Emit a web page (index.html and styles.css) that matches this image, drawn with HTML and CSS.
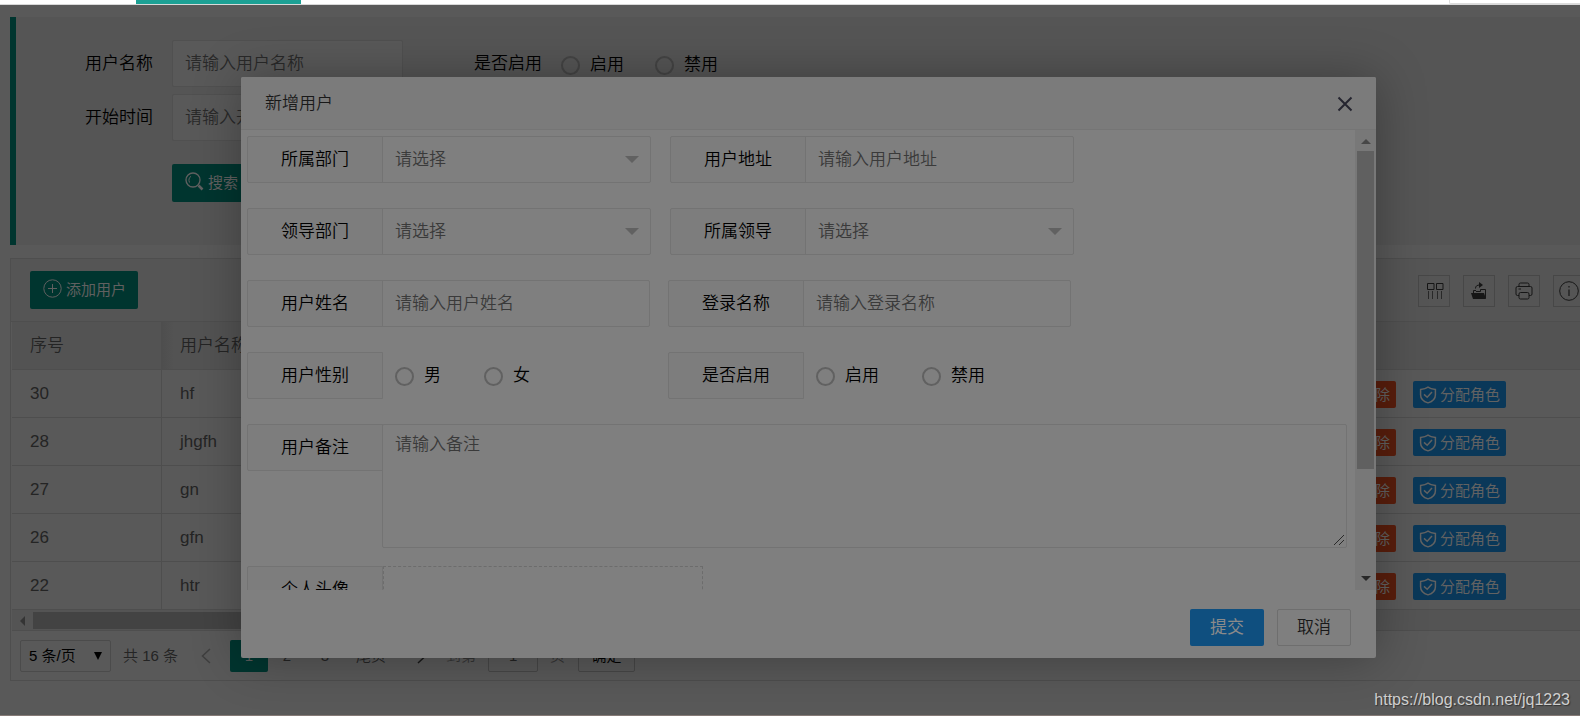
FILE: index.html
```html
<!DOCTYPE html>
<html lang="zh-CN">
<head>
<meta charset="utf-8">
<title>用户管理</title>
<link rel="stylesheet" href="styles.css">
</head>
<body>
<svg class="sprite" aria-hidden="true">
  <symbol id="shield" viewBox="0 0 18 18"><path d="M9 1.2C7 2.7 4.600 3.200 1.600 3.400V9c0 4 3.200 6.600 7.400 7.900C13.200 15.600 16.400 13 16.400 9V3.400C13.400 3.200 11 2.700 9 1.200Z" fill="none" stroke="currentColor" stroke-width="1.500"/><path d="M5 8.400 8.200 11.300 13 6" fill="none" stroke="currentColor" stroke-width="1.500"/></symbol>
  <symbol id="caret" viewBox="0 0 14 7"><path d="M0 0H14L7 7Z" fill="currentColor"/></symbol>
</svg>

<header class="topbar">
  <div class="topbar-tab"></div>
  <div class="topbar-menu"></div>
</header>

<main class="page">
  <form class="search">
    <div class="search-row">
      <label class="search-label" for="q-name">用户名称</label>
      <input class="search-input" id="q-name" placeholder="请输入用户名称">
      <span class="search-label status-label">是否启用</span>
      <label class="radio search-radio"><input type="radio" name="q-state">启用</label>
      <label class="radio search-radio"><input type="radio" name="q-state">禁用</label>
    </div>
    <div class="search-row">
      <label class="search-label" for="q-start">开始时间</label>
      <input class="search-input" id="q-start" placeholder="请输入开始时间">
    </div>
    <div class="search-actions">
      <button type="button" class="btn">
        <svg width="19" height="19" viewBox="0 0 19 19" fill="none" stroke="currentColor"><circle cx="8" cy="8" r="7" stroke-width="1.300"/><path d="M4.500 10.500C3.300 8 4 5.500 6 4.300" stroke-width="1"/><path d="M13.500 13.500 17.500 17.500" stroke-width="2.500"/></svg>
        搜索
      </button>
    </div>
  </form>

  <section class="grid">
    <div class="grid-tools">
      <button type="button" class="btn">
        <svg width="19" height="19" viewBox="0 0 19 19" fill="none" stroke="currentColor"><circle cx="9.500" cy="9.500" r="8.700"/><path d="M9.500 5V14M5 9.500H14"/></svg>
        添加用户
      </button>
      <div class="tool-icons">
        <button type="button" class="tool" aria-label="筛选列"><svg width="18" height="18" viewBox="0 0 18 18" fill="none" stroke="currentColor"><path d="M2.500 1.500H9V7.500H2.500ZM11.500 1.500H18V7.500H11.500Z"/><path d="M3.500 9V17M7.500 9V17M12.500 9V17M16.500 9V17" stroke-opacity=".7"/></svg></button>
        <button type="button" class="tool" aria-label="导出"><svg width="18" height="18" viewBox="0 0 18 18"><path d="M1 11H14L16 17H3Z" fill="currentColor"/><path d="M3.500 11V8.500H6M15.500 16V7.500H10.500V9.500H6M5.500 6.500C5.500 4 7 3 10 3" fill="none" stroke="currentColor"/><path d="M9 0 13 3 9 6Z" fill="currentColor"/></svg></button>
        <button type="button" class="tool" aria-label="打印"><svg width="18" height="18" viewBox="0 0 18 18" fill="none" stroke="currentColor"><path d="M4 4.500V2.500Q4 1 5.500 1H12.500Q14 1 14 2.500V4.500M4 13.500H2.500Q1 13.500 1 12V6Q1 4.500 2.500 4.500H15.500Q17 4.500 17 6V12Q17 13.500 15.500 13.500H14M3.500 7H6"/><rect x="4" y="10.500" width="10" height="6.500" rx="1.500"/></svg></button>
        <button type="button" class="tool" aria-label="提示"><svg width="20" height="20" viewBox="0 0 20 20" fill="none" stroke="currentColor"><circle cx="10" cy="10" r="9.300"/><path d="M10 8.500V15M10 5V6.500" stroke-width="1.200"/></svg></button>
      </div>
    </div>

    <table class="users">
      <thead><tr><th class="col-id">序号</th><th class="col-name">用户名称</th><th></th></tr></thead>
      <tbody>
        <tr><td class="col-id">30</td><td>hf</td><td class="ops"><button type="button" class="op del">删除</button><button type="button" class="op role"><svg width="18" height="18"><use href="#shield"/></svg>分配角色</button></td></tr>
        <tr><td class="col-id">28</td><td>jhgfh</td><td class="ops"><button type="button" class="op del">删除</button><button type="button" class="op role"><svg width="18" height="18"><use href="#shield"/></svg>分配角色</button></td></tr>
        <tr><td class="col-id">27</td><td>gn</td><td class="ops"><button type="button" class="op del">删除</button><button type="button" class="op role"><svg width="18" height="18"><use href="#shield"/></svg>分配角色</button></td></tr>
        <tr><td class="col-id">26</td><td>gfn</td><td class="ops"><button type="button" class="op del">删除</button><button type="button" class="op role"><svg width="18" height="18"><use href="#shield"/></svg>分配角色</button></td></tr>
        <tr><td class="col-id">22</td><td>htr</td><td class="ops"><button type="button" class="op del">删除</button><button type="button" class="op role"><svg width="18" height="18"><use href="#shield"/></svg>分配角色</button></td></tr>
      </tbody>
    </table>

    <div class="hscroll">
      <svg width="5" height="10" viewBox="0 0 5 10"><path d="M5 0V10L0 5Z" fill="currentColor"/></svg>
      <div class="hscroll-thumb"></div>
    </div>

    <nav class="pager">
      <div class="page-size">
        <select aria-label="每页条数"><option>5 条/页</option></select>
        <svg width="8" height="8" viewBox="0 0 8 8"><path d="M0 0H8L4 8Z"/></svg>
      </div>
      <span class="total">共 16 条</span>
      <button type="button" class="arrow prev" aria-label="上一页"><svg width="10" height="16" viewBox="0 0 10 16" fill="none" stroke="currentColor" stroke-width="1.500"><path d="M9 1 1.500 8 9 15"/></svg></button>
      <button type="button" class="num current">1</button>
      <button type="button" class="num">2</button>
      <button type="button" class="num">3</button>
      <button type="button" class="last">尾页</button>
      <button type="button" class="arrow" aria-label="下一页"><svg width="10" height="16" viewBox="0 0 10 16" fill="none" stroke="currentColor" stroke-width="1.500"><path d="M1 1 8.500 8 1 15"/></svg></button>
      <label class="jump">到第 <input value="1"> 页</label>
      <button type="button" class="go">确定</button>
    </nav>
  </section>
</main>
<footer class="baseline"></footer>

<div class="watermark">https://blog.csdn.net/jq1223</div>

<div class="modal" role="dialog" aria-labelledby="modal-title">
  <div class="modal-head">
    <h2 id="modal-title">新增用户</h2>
    <button type="button" class="close" aria-label="关闭"><svg width="16" height="16" viewBox="0 0 16 16" fill="none" stroke="currentColor" stroke-width="2"><path d="M1.500 1.500 14.500 14.500M14.500 1.500 1.500 14.500"/></svg></button>
  </div>
  <div class="modal-body">
    <form class="fields">
      <div class="row">
        <div class="group"><label for="dept">所属部门</label><div class="select"><select id="dept"><option>请选择</option></select><svg width="14" height="7"><use href="#caret"/></svg></div></div>
        <div class="group"><label for="addr">用户地址</label><input id="addr" placeholder="请输入用户地址"></div>
      </div>
      <div class="row">
        <div class="group"><label for="lead-dept">领导部门</label><div class="select"><select id="lead-dept"><option>请选择</option></select><svg width="14" height="7"><use href="#caret"/></svg></div></div>
        <div class="group"><label for="leader">所属领导</label><div class="select"><select id="leader"><option>请选择</option></select><svg width="14" height="7"><use href="#caret"/></svg></div></div>
      </div>
      <div class="row narrow">
        <div class="group"><label for="real-name">用户姓名</label><input id="real-name" placeholder="请输入用户姓名"></div>
        <div class="group"><label for="login">登录名称</label><input id="login" placeholder="请输入登录名称"></div>
      </div>
      <div class="row narrow">
        <div class="group"><span class="caption">用户性别</span><div class="radios"><label class="radio"><input type="radio" name="sex">男</label><label class="radio"><input type="radio" name="sex">女</label></div></div>
        <div class="group"><span class="caption">是否启用</span><div class="radios"><label class="radio"><input type="radio" name="state">启用</label><label class="radio"><input type="radio" name="state">禁用</label></div></div>
      </div>
      <div class="row memo">
        <label for="memo">用户备注</label>
        <div class="memo-box">
          <textarea id="memo" placeholder="请输入备注"></textarea>
          <svg class="grip" width="12" height="12" viewBox="0 0 12 12" fill="none" stroke="currentColor"><path d="M1 11 11 1M6 11 11 6"/></svg>
        </div>
      </div>
      <div class="row">
        <span class="caption">个人头像</span><div class="avatar"></div>
      </div>
    </form>
    <div class="vscroll">
      <svg class="up" width="10" height="5" viewBox="0 0 10 5"><path d="M0 5H10L5 0Z" fill="currentColor"/></svg>
      <div class="vscroll-thumb"></div>
      <svg class="down" width="10" height="5" viewBox="0 0 10 5"><path d="M0 0H10L5 5Z" fill="currentColor"/></svg>
    </div>
  </div>
  <div class="modal-foot">
    <button type="button" class="submit">提交</button>
    <button type="button" class="cancel">取消</button>
  </div>
</div>
</body>
</html>
```
FILE: styles.css
```css
* { box-sizing: border-box; }

body {
  margin: 0;
  height: 100vh;
  overflow: hidden;
  display: flex;
  flex-direction: column;
  background: #595959;
  color: #242424;
  font: 350 17px/24px "Liberation Sans", "Noto Sans CJK SC", sans-serif;
}

button, input, select, textarea {
  margin: 0;
  font: inherit;
  color: inherit;
  border-radius: 2px;
  outline: 0;
}

button { padding: 0; border: 0; background: none; }
select { appearance: none; }
svg { display: block; flex: none; }
.sprite { position: absolute; width: 0; height: 0; }

/* top bar */
.topbar {
  flex: none;
  height: 5px;
  display: flex;
  justify-content: space-between;
  background: #fff;
  border-bottom: 1px solid #d8d8d8;
}
.topbar-tab { width: 165px; margin-left: 136px; background: #1ca094; }
.topbar-menu { width: 131px; border: solid #dcdcdc; border-width: 0 0 1px 1px; border-radius: 0 0 0 2px; }

.page { flex: 1; min-height: 0; padding: 12px 0 0 10px; overflow: hidden; }
.baseline { flex: none; height: 3px; background: #fff; border-top: 1px solid #857a76; }

/* search panel */
.search {
  height: 228px;
  padding: 23px 0 0 56px;
  background: #555;
  border-left: 6px solid #00352f;
}
.search-row { display: flex; align-items: center; margin-bottom: 7px; }
.search-label { width: 100px; padding-right: 19px; text-align: right; color: #000; white-space: nowrap; }
.search-input {
  width: 231px;
  height: 47px;
  padding: 0 12px;
  background: #595959;
  border: 1px solid #505050;
}
.search-input::placeholder { color: #292929; }
.status-label { width: 158px; }
.radio { display: flex; align-items: center; gap: 10px; color: #000; }
.radio input {
  appearance: none;
  width: 19px;
  height: 19px;
  border: 2px solid #616161;
  border-radius: 50%;
}
.search-radio { margin-right: 31px; padding-top: 3px; }
.search-radio input { border-color: #444; }
.search-actions { padding: 16px 0 0 100px; }

.btn {
  height: 38px;
  padding: 0 12px 0 13px;
  display: flex;
  align-items: center;
  gap: 4px;
  background: #00352f;
  color: #606060;
  font-size: 15px;
  font-weight: 400;
}
.btn svg { margin-bottom: 3px; }

/* table */
.grid { margin-top: 13px; border: 1px solid #4e4e4e; border-right: 0; }
.grid-tools {
  height: 63px;
  padding-left: 19px;
  display: flex;
  align-items: center;
  justify-content: space-between;
  background: #555;
  border-bottom: 1px solid #4e4e4e;
}
.tool-icons { display: flex; gap: 13px; margin-right: -5px; padding-top: 1px; }
.tool {
  width: 32px;
  height: 32px;
  display: grid;
  place-items: center;
  border: 1px solid #474747;
  border-radius: 0;
  color: #161616;
}
.tool svg { overflow: visible; }
.users { width: 100%; border-spacing: 0; padding-left: 1px; table-layout: fixed; }
.users th, .users td {
  height: 48px;
  padding: 0 18px;
  border-bottom: 1px solid #4e4e4e;
  text-align: left;
  font-weight: 350;
}
.users th { background: #535353; }
.users .col-id { width: 150px; border-right: 1px solid #4e4e4e; }
.users .col-name { width: 400px; background: linear-gradient(90deg, #4e4e4e, #535353 12px); }
.ops > * { vertical-align: middle; }
.users .ops { padding: 2px 74px 0 0; text-align: right; white-space: nowrap; font-size: 0; }
.op { height: 27px; padding: 0 6px; font-size: 15px; font-weight: 400; color: #626262; }
.del { background: #591e0c; }
.role { display: inline-flex; align-items: center; gap: 3px; margin-left: 17px; background: #0a3859; }

.hscroll {
  height: 21px;
  margin-left: 1px;
  padding: 2px 0 1px 8px;
  display: flex;
  align-items: center;
  gap: 8px;
  background: #545454;
  border-bottom: 1px solid #4e4e4e;
  color: #343434;
}
.hscroll-thumb { width: 840px; height: 17px; background: #434343; }

.pager { height: 49px; padding-left: 9px; display: flex; align-items: center; font-size: 15px; white-space: nowrap; }
.page-size { display: flex; align-items: center; width: 91px; height: 32px; border: 1px solid #4b4b4b; border-radius: 2px; }
.page-size select { flex: 1; padding: 0 0 0 8px; border: 0; background: none; color: #000; }
.page-size svg { margin-right: 8px; }
.total { margin-left: 12px; }
.arrow { width: 48px; height: 32px; display: grid; place-items: center; color: #181818; }
.prev { margin-left: 4px; color: #3f3f3f; }
.num { width: 38px; height: 32px; }
.current { background: #00352f; color: #595959; }
.last { width: 54px; }
.jump { display: flex; align-items: center; gap: 12px; color: #333; }
.jump input { width: 50px; height: 32px; padding: 0; background: none; border: 1px solid #474747; text-align: center; color: #242424; }
.go { width: 57px; height: 32px; margin-left: 13px; border: 1px solid #474747; color: #000; }

.watermark {
  position: absolute;
  right: 10px;
  bottom: 6px;
  color: #cfcfcf;
  font-size: 16px;
  text-shadow: 1px 1px 1px #333;
}

/* dialog */
.modal {
  position: absolute;
  top: 77px;
  left: 241px;
  right: 204px;
  background: #7f7f7f;
  border-radius: 2px;
  box-shadow: 1px 1px 50px rgba(0, 0, 0, .3);
  color: #191919;
}
.modal-head {
  height: 53px;
  padding: 2px 23px 0 24px;
  display: flex;
  align-items: center;
  justify-content: space-between;
  background: #7b7b7b;
  border-bottom: 1px solid #757575;
  border-radius: 2px 2px 0 0;
}
.modal-head h2 { margin: 0; font: inherit; }
.close { color: #252530; }
.modal-body { height: 460px; display: flex; }
.fields { flex: 1; overflow: hidden; padding: 6px 8px 0 6px; }
.row { display: flex; gap: 19px; margin-bottom: 25px; }
.group { display: flex; width: 404px; }
.narrow { gap: 18px; }
.narrow .group { width: 403px; }
.group > label, .row > label, .caption {
  flex: none;
  width: 136px;
  height: 47px;
  border: 1px solid #737373;
  border-radius: 2px 0 0 2px;
  background: #7d7d7d;
  color: #000;
  line-height: 46px;
  text-align: center;
}
.group > input, .select, textarea {
  flex: 1;
  min-width: 0;
  margin-left: -1px;
  border: 1px solid #737373;
  border-radius: 0 2px 2px 0;
  background: #7f7f7f;
  padding: 0 12px;
}
.modal input::placeholder, .modal textarea::placeholder { color: #3a3a3a; }
.select { display: flex; align-items: center; padding: 0 11px 0 0; color: #616161; }
.select select { flex: 1; height: 45px; padding: 0 0 0 12px; border: 0; background: none; color: #3a3a3a; }
.radios { display: flex; gap: 43px; padding: 1px 0 0 12px; }
.memo { gap: 0; margin-bottom: 18px; }
.memo-box { position: relative; flex: 1; display: flex; }
textarea { display: block; height: 124px; padding: 8px 12px; border-radius: 2px; resize: none; }
.grip { position: absolute; right: 2px; bottom: 2px; color: #2a2a2a; }
.avatar { width: 320px; height: 160px; margin-left: -19px; border: 1px dashed #6c6c6c; }

.vscroll { width: 21px; padding: 9px 0; display: flex; flex-direction: column; align-items: center; background: #787878; color: #474747; }
.vscroll-thumb { width: 17px; height: 318px; margin-top: 7px; background: #606060; }
.down { margin-top: auto; color: #282828; }

.modal-foot { height: 68px; padding: 7px 25px 0 0; display: flex; align-items: center; justify-content: flex-end; gap: 13px; }
.modal-foot button { width: 74px; height: 37px; }
.modal-foot .submit { background: #0f4f7f; color: #8a8a8a; font-weight: 400; }
.cancel { border: 1px solid #6e6e6e; }
```
